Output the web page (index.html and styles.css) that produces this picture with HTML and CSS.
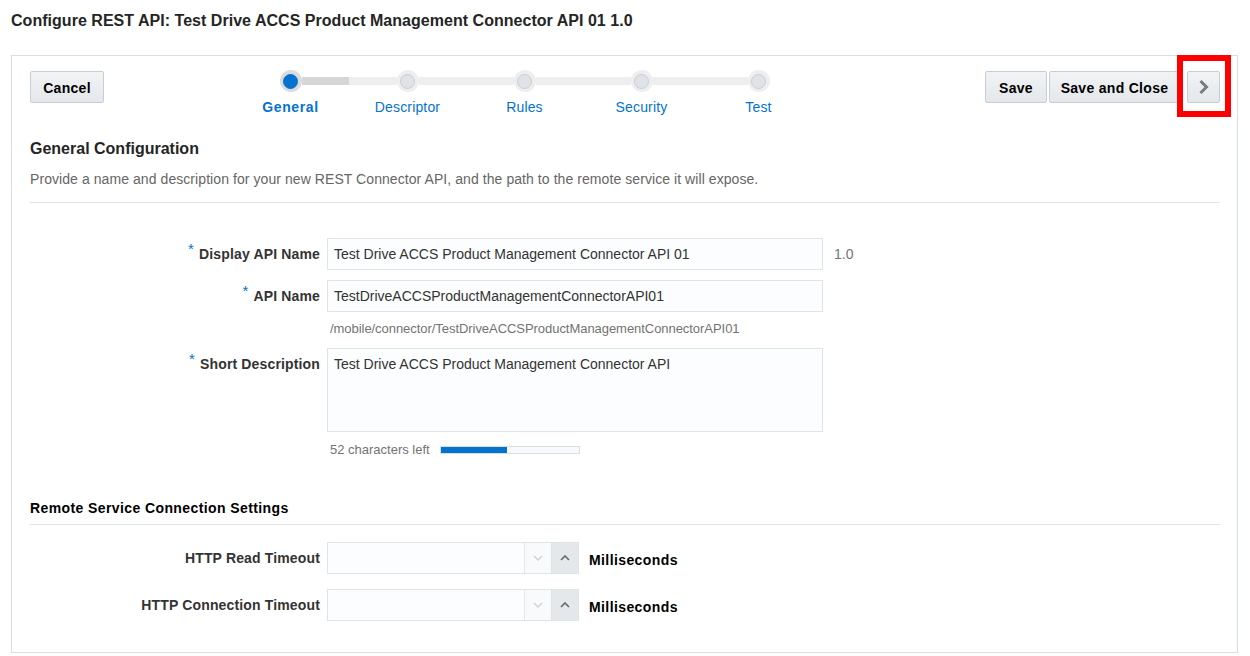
FILE: index.html
```html
<!DOCTYPE html>
<html>
<head>
<meta charset="utf-8">
<link rel="stylesheet" href="styles.css">
</head>
<body>
<h1 class="page-title">Configure REST API: Test Drive ACCS Product Management Connector API 01 1.0</h1>
<div class="panel">
  <div class="panel-header">
    <button class="btn btn-cancel">Cancel</button>
    <div class="train">
      <div class="step active first">
        <div class="track"><span class="seg seg-left"></span><span class="dot"><span class="dot-inner"></span></span><span class="seg seg-right done"></span></div>
        <div class="step-label">General</div>
      </div>
      <div class="step">
        <div class="track"><span class="seg seg-left"></span><span class="dot"><span class="dot-inner"></span></span><span class="seg seg-right"></span></div>
        <div class="step-label">Descriptor</div>
      </div>
      <div class="step">
        <div class="track"><span class="seg seg-left"></span><span class="dot"><span class="dot-inner"></span></span><span class="seg seg-right"></span></div>
        <div class="step-label">Rules</div>
      </div>
      <div class="step">
        <div class="track"><span class="seg seg-left"></span><span class="dot"><span class="dot-inner"></span></span><span class="seg seg-right"></span></div>
        <div class="step-label">Security</div>
      </div>
      <div class="step last">
        <div class="track"><span class="seg seg-left"></span><span class="dot"><span class="dot-inner"></span></span><span class="seg seg-right"></span></div>
        <div class="step-label">Test</div>
      </div>
    </div>
    <div class="actions">
      <button class="btn btn-save">Save</button>
      <button class="btn btn-close">Save and Close</button>
      <button class="btn btn-next" aria-label="Next">
        <svg width="12" height="16" viewBox="0 0 12 16"><path d="M2.5 2 L8.5 8 L2.5 14" fill="none" stroke="#7a7a7a" stroke-width="3" stroke-linejoin="miter"/></svg>
      </button>
      <span class="highlight"></span>
    </div>
  </div>

  <div class="section-head">
    <h2 class="section-title">General Configuration</h2>
    <p class="section-desc">Provide a name and description for your new REST Connector API, and the path to the remote service it will expose.</p>
  </div>

  <div class="form">
    <div class="field">
      <label class="field-label"><span class="req">*</span>Display API Name</label>
      <div class="field-control">
        <div class="input">Test Drive ACCS Product Management Connector API 01</div>
        <span class="version">1.0</span>
      </div>
    </div>
    <div class="field field-api">
      <label class="field-label"><span class="req">*</span>API Name</label>
      <div class="field-control">
        <div class="input">TestDriveACCSProductManagementConnectorAPI01</div>
      </div>
    </div>
    <div class="hint hint-path">/mobile/connector/TestDriveACCSProductManagementConnectorAPI01</div>
    <div class="field field-desc">
      <label class="field-label"><span class="req">*</span>Short Description</label>
      <div class="field-control">
        <div class="textarea">Test Drive ACCS Product Management Connector API</div>
      </div>
    </div>
    <div class="hint hint-count">
      <span>52 characters left</span>
      <span class="meter"><span class="meter-fill" style="width: 48%"></span></span>
    </div>
  </div>

  <div class="subsection-head">
    <h3 class="subsection-title">Remote Service Connection Settings</h3>
  </div>

  <div class="form form-remote">
    <div class="field">
      <label class="field-label">HTTP Read Timeout</label>
      <div class="field-control">
        <div class="spinner">
          <span class="spin-text"></span>
          <span class="spin-btn spin-down"><svg width="10" height="6" viewBox="0 0 10 6"><path d="M1 1 L5 5 L9 1" fill="none" stroke="#cfd4d8" stroke-width="1.5"/></svg></span>
          <span class="spin-btn spin-up"><svg width="10" height="6" viewBox="0 0 10 6"><path d="M1 5 L5 1 L9 5" fill="none" stroke="#666" stroke-width="1.6"/></svg></span>
        </div>
        <span class="unit">Milliseconds</span>
      </div>
    </div>
    <div class="field field-conn">
      <label class="field-label">HTTP Connection Timeout</label>
      <div class="field-control">
        <div class="spinner">
          <span class="spin-text"></span>
          <span class="spin-btn spin-down"><svg width="10" height="6" viewBox="0 0 10 6"><path d="M1 1 L5 5 L9 1" fill="none" stroke="#cfd4d8" stroke-width="1.5"/></svg></span>
          <span class="spin-btn spin-up"><svg width="10" height="6" viewBox="0 0 10 6"><path d="M1 5 L5 1 L9 5" fill="none" stroke="#666" stroke-width="1.6"/></svg></span>
        </div>
        <span class="unit">Milliseconds</span>
      </div>
    </div>
  </div>
</div>
</body>
</html>
```

FILE: styles.css
```css
* { box-sizing: border-box; }

html, body {
  margin: 0;
  padding: 0;
  background: #ffffff;
  font-family: "Liberation Sans", Arial, sans-serif;
  color: #333333;
}

.page-title {
  margin: 0;
  padding: 11px 11px 0 11px;
  height: 55px;
  font-size: 16px;
  line-height: 20px;
  font-weight: bold;
  color: #252525;
  letter-spacing: 0.03px;
}

.panel {
  margin: 0 12px 0 11px;
  border: 1px solid #d6dfe6;
  background: #ffffff;
  padding: 15px 17px 31px 18px;
}

/* header */
.panel-header {
  display: flex;
  align-items: flex-start;
  height: 32px;
}

.btn {
  height: 32px;
  padding: 2px 0 0 0;
  border: 1px solid #c4ced7;
  border-radius: 2px;
  background: linear-gradient(#f1f3f5, #e4e8ea);
  font-family: "Liberation Sans", Arial, sans-serif;
  font-size: 14px;
  font-weight: bold;
  letter-spacing: 0.3px;
  color: #000000;
  line-height: 28px;
  cursor: pointer;
}

.btn-cancel { width: 74px; }
.btn-save { width: 62px; }
.btn-close { width: 131px; margin-left: 2px; }
.btn-next {
  width: 33px;
  margin-left: 7px;
  padding: 0;
  display: flex;
  align-items: center;
  justify-content: center;
}

.actions {
  margin-left: auto;
  display: flex;
  align-items: flex-start;
  position: relative;
}

.highlight {
  position: absolute;
  right: -11px;
  top: -16px;
  width: 54px;
  height: 62px;
  border: 6px solid #ff0000;
  pointer-events: none;
}

/* train */
.train {
  display: flex;
  margin-left: 128px;
  margin-top: -1px;
}

.step {
  width: 117px;
  display: flex;
  flex-direction: column;
  align-items: stretch;
}

.track {
  display: flex;
  align-items: center;
  height: 22px;
}

.seg {
  flex: 1;
  height: 8px;
  background: #eeeeee;
}

.seg.done { background: #d6d6d6; }
.first .seg-left,
.last .seg-right { background: transparent; }

.dot {
  width: 22px;
  height: 22px;
  border-radius: 50%;
  background: #eeeeee;
  display: flex;
  align-items: center;
  justify-content: center;
  flex: none;
}

.dot-inner {
  width: 15px;
  height: 15px;
  border-radius: 50%;
  background: #dfe3e8;
  border: 1px solid #c5ced6;
}

.active .dot { background: #dcdcdc; }
.active .dot-inner {
  background: #0572ce;
  border-color: #0572ce;
}

.step-label {
  margin-top: 7px;
  text-align: center;
  font-size: 14px;
  line-height: 17px;
  color: #0572ce;
  letter-spacing: 0.15px;
}

.active .step-label { font-weight: bold; letter-spacing: 0.6px; }

/* section */
.section-head {
  margin-top: 36px;
  border-bottom: 1px solid #dfe4e7;
  padding-bottom: 14px;
}

.section-title {
  margin: 0;
  font-size: 16px;
  line-height: 20px;
  font-weight: bold;
  color: #252525;
}

.section-desc {
  margin: 12px 0 0 0;
  font-size: 14px;
  line-height: 17px;
  color: #666666;
  letter-spacing: 0.07px;
}

/* form */
.form {
  margin-top: 35px;
}

.field {
  display: grid;
  grid-template-columns: 290px 1fr;
  column-gap: 7px;
}

.field-api { margin-top: 10px; }
.field-desc { margin-top: 11px; }

.field-label {
  text-align: right;
  font-size: 14px;
  line-height: 32px;
  font-weight: bold;
  color: #333333;
  white-space: nowrap;
  letter-spacing: 0.15px;
}

.req {
  color: #0572ce;
  font-weight: normal;
  font-size: 15px;
  vertical-align: 5px;
  line-height: 0;
  margin-right: 5px;
}

.field-control {
  display: flex;
  align-items: center;
}

.input {
  width: 496px;
  height: 32px;
  border: 1px solid #dfe4e7;
  background: #fcfdfe;
  padding: 0 6px;
  font-size: 14px;
  line-height: 30px;
  color: #333333;
  white-space: nowrap;
}

.version {
  margin-left: 11px;
  font-size: 14px;
  color: #737373;
}

.textarea {
  width: 496px;
  height: 84px;
  border: 1px solid #dfe4e7;
  background: #fcfdfe;
  padding: 7px 6px;
  font-size: 14px;
  line-height: 17px;
  color: #333333;
}

.hint {
  margin-left: 300px;
  font-size: 13px;
  line-height: 16px;
  color: #737373;
}

.hint-path { margin-top: 9px; letter-spacing: -0.05px; }

.hint-count {
  margin-top: 10px;
  display: flex;
  align-items: center;
}

.meter {
  margin-left: 10px;
  width: 140px;
  height: 8px;
  border: 1px solid #d6dfe6;
  background: #f7f9fa;
  display: flex;
}

.meter-fill {
  height: 100%;
  background: #0572ce;
}

/* remote section */
.subsection-head {
  margin-top: 42px;
  border-bottom: 1px solid #dfe4e7;
  padding-bottom: 7px;
}

.subsection-title {
  margin: 0;
  font-size: 14px;
  line-height: 17px;
  font-weight: bold;
  color: #000000;
  letter-spacing: 0.4px;
}

.form-remote { margin-top: 17px; }
.field-conn { margin-top: 15px; }

.spinner {
  width: 252px;
  height: 32px;
  border: 1px solid #dfe4e7;
  background: #fcfdfe;
  display: flex;
}

.spin-text { flex: 1; }

.spin-btn {
  width: 27px;
  display: flex;
  align-items: center;
  justify-content: center;
  border-left: 1px solid #e3e7ea;
}

.spin-down { background: #f9fafb; }
.spin-up { background: #e4e8ea; border-left-color: #dde2e5; }

.unit {
  margin-left: 10px;
  margin-top: 4px;
  font-size: 14px;
  font-weight: bold;
  color: #000000;
  letter-spacing: 0.4px;
}
```
